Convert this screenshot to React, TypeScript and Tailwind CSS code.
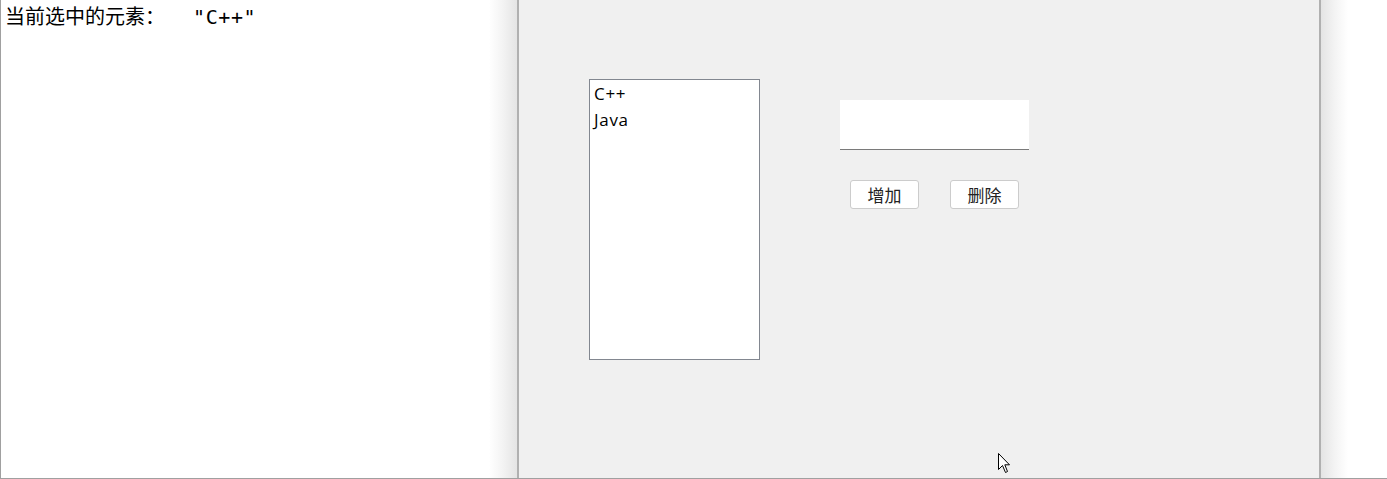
import React from 'react';

const Cursor: React.FC = () => (
  <svg width="13" height="21" viewBox="0 0 13 21" className="absolute left-[997px] top-[453px]">
    <path d="M0.5 0.5 L0.5 16.5 L4.5 12.5 L7.5 19.5 L9.5 18.5 L6.8 11.8 L11.5 11.8 Z" fill="#fff" stroke="#000" strokeWidth="1" />
  </svg>
);

const App: React.FC = () => {
  const items = ['C++', 'Java'];

  return (
    <div className="relative flex w-[1387px] h-[479px] bg-white border-l border-b border-[#a0a0a0] overflow-hidden">
      <div className="w-[488px] shrink-0 pl-[4px] pt-[2px]">
        <p className="flex items-baseline text-[20px] leading-[28px] text-black whitespace-pre font-['Noto_Sans_CJK_SC',sans-serif]">
          <span>当前选中的元素：</span>
          <span className="ml-[28px] font-['DejaVu_Sans_Mono',monospace] text-[20px] tracking-[0.6px]">"C++"</span>
        </p>
      </div>

      <div className="w-[28px] shrink-0 bg-gradient-to-r from-[#ffffff] via-[#f3f3f3] to-[#e4e4e4]" />
      <div className="w-[2px] shrink-0 bg-[#b0b0b0]" />

      <div className="w-[800px] shrink-0 bg-[#f0f0f0] flex items-start pl-[70px] pt-[79px]">
        <ul className="w-[171px] h-[281px] bg-white border border-[#828790] pl-[4px] pt-[1px] font-['Open_Sans',sans-serif] text-[17px] leading-[26px] text-black">
          {items.map((item) => (
            <li key={item} className="tracking-[0.7px]">{item}</li>
          ))}
        </ul>

        <div className="ml-[80px] mt-[21px] flex flex-col">
          <div className="w-[189px] h-[50px] bg-white border-b border-[#7a7a7a]" />
          <div className="flex gap-[31px] pl-[10px] mt-[30px]">
            {['增加', '删除'].map((label) => (
              <button
                key={label}
                className="w-[69px] h-[29px] bg-white border border-[#cccccc] rounded-[3px] text-[17px] text-[#222] font-['Noto_Sans_CJK_SC',sans-serif] leading-none"
              >
                {label}
              </button>
            ))}
          </div>
        </div>
      </div>

      <div className="w-[2px] shrink-0 bg-[#b0b0b0]" />
      <div className="w-[27px] shrink-0 bg-gradient-to-r from-[#e4e4e4] via-[#f3f3f3] to-[#ffffff]" />
      <div className="flex-1" />

      <Cursor />
    </div>
  );
};

export default App;
